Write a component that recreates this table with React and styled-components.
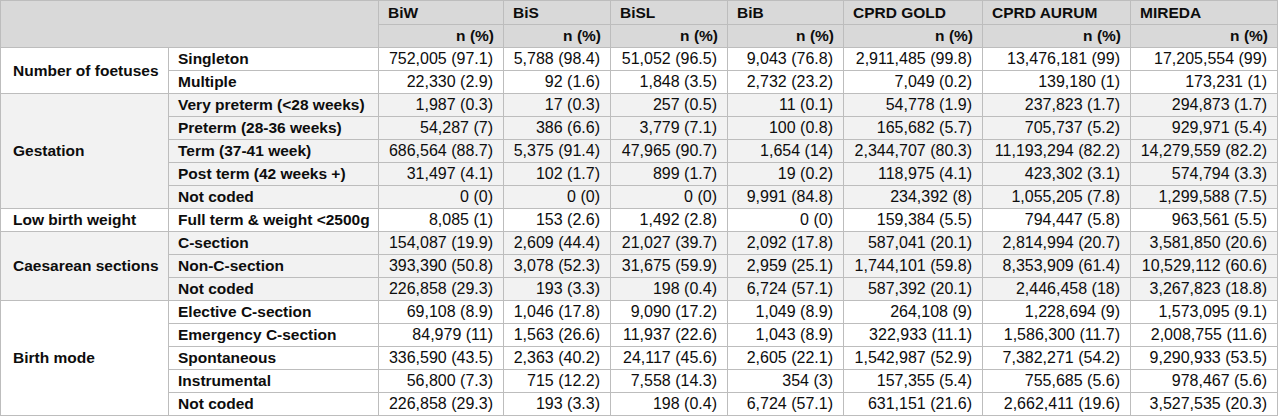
import React from "react";
import styled, { createGlobalStyle } from "styled-components";

const Global = createGlobalStyle`
  html, body { margin: 0; padding: 0; background: #fff; }
  body { font-family: "Liberation Sans", Arial, sans-serif; color: #0d0d0d; }
`;

const cols = [
  { name: "BiW", w: 125 },
  { name: "BiS", w: 107 },
  { name: "BiSL", w: 117 },
  { name: "BiB", w: 116 },
  { name: "CPRD GOLD", w: 139 },
  { name: "CPRD AURUM", w: 148 },
  { name: "MIREDA", w: 147 },
];

const groups = [
  {
    label: "Number of foetuses",
    shaded: false,
    rows: [
      ["Singleton", "752,005 (97.1)", "5,788 (98.4)", "51,052 (96.5)", "9,043 (76.8)", "2,911,485 (99.8)", "13,476,181 (99)", "17,205,554 (99)"],
      ["Multiple", "22,330 (2.9)", "92 (1.6)", "1,848 (3.5)", "2,732 (23.2)", "7,049 (0.2)", "139,180 (1)", "173,231 (1)"],
    ],
  },
  {
    label: "Gestation",
    shaded: true,
    rows: [
      ["Very preterm (<28 weeks)", "1,987 (0.3)", "17 (0.3)", "257 (0.5)", "11 (0.1)", "54,778 (1.9)", "237,823 (1.7)", "294,873 (1.7)"],
      ["Preterm (28-36 weeks)", "54,287 (7)", "386 (6.6)", "3,779 (7.1)", "100 (0.8)", "165,682 (5.7)", "705,737 (5.2)", "929,971 (5.4)"],
      ["Term (37-41 week)", "686,564 (88.7)", "5,375 (91.4)", "47,965 (90.7)", "1,654 (14)", "2,344,707 (80.3)", "11,193,294 (82.2)", "14,279,559 (82.2)"],
      ["Post term (42 weeks +)", "31,497 (4.1)", "102 (1.7)", "899 (1.7)", "19 (0.2)", "118,975 (4.1)", "423,302 (3.1)", "574,794 (3.3)"],
      ["Not coded", "0 (0)", "0 (0)", "0 (0)", "9,991 (84.8)", "234,392 (8)", "1,055,205 (7.8)", "1,299,588 (7.5)"],
    ],
  },
  {
    label: "Low birth weight",
    shaded: false,
    rows: [
      ["Full term & weight <2500g", "8,085 (1)", "153 (2.6)", "1,492 (2.8)", "0 (0)", "159,384 (5.5)", "794,447 (5.8)", "963,561 (5.5)"],
    ],
  },
  {
    label: "Caesarean sections",
    shaded: true,
    rows: [
      ["C-section", "154,087 (19.9)", "2,609 (44.4)", "21,027 (39.7)", "2,092 (17.8)", "587,041 (20.1)", "2,814,994 (20.7)", "3,581,850 (20.6)"],
      ["Non-C-section", "393,390 (50.8)", "3,078 (52.3)", "31,675 (59.9)", "2,959 (25.1)", "1,744,101 (59.8)", "8,353,909 (61.4)", "10,529,112 (60.6)"],
      ["Not coded", "226,858 (29.3)", "193 (3.3)", "198 (0.4)", "6,724 (57.1)", "587,392 (20.1)", "2,446,458 (18)", "3,267,823 (18.8)"],
    ],
  },
  {
    label: "Birth mode",
    shaded: false,
    rows: [
      ["Elective C-section", "69,108 (8.9)", "1,046 (17.8)", "9,090 (17.2)", "1,049 (8.9)", "264,108 (9)", "1,228,694 (9)", "1,573,095 (9.1)"],
      ["Emergency C-section", "84,979 (11)", "1,563 (26.6)", "11,937 (22.6)", "1,043 (8.9)", "322,933 (11.1)", "1,586,300 (11.7)", "2,008,755 (11.6)"],
      ["Spontaneous", "336,590 (43.5)", "2,363 (40.2)", "24,117 (45.6)", "2,605 (22.1)", "1,542,987 (52.9)", "7,382,271 (54.2)", "9,290,933 (53.5)"],
      ["Instrumental", "56,800 (7.3)", "715 (12.2)", "7,558 (14.3)", "354 (3)", "157,355 (5.4)", "755,685 (5.6)", "978,467 (5.6)"],
      ["Not coded", "226,858 (29.3)", "193 (3.3)", "198 (0.4)", "6,724 (57.1)", "631,151 (21.6)", "2,662,411 (19.6)", "3,527,535 (20.3)"],
    ],
  },
];

const Table = styled.table`
  border-collapse: collapse;
  table-layout: fixed;
  width: 1277px;
  font-size: 15.5px;
  line-height: 18px;
  border: 1px solid #bdbdbd;
`;

const HeadRow = styled.tr`
  height: ${(p) => p.$h}px;
  background: #d9d9d9;
`;

const Corner = styled.th`
  border: 1px solid #bdbdbd;
  background: #d9d9d9;
`;

const HeadCell = styled.th`
  border: 1px solid #bdbdbd;
  font-weight: 700;
  text-align: ${(p) => (p.$right ? "right" : "left")};
  padding: ${(p) => (p.$right ? "0 9px 0 6px" : "0 6px 0 9px")};
  white-space: nowrap;
  vertical-align: middle;
`;

const BodyRow = styled.tr`
  height: 23px;
  background: ${(p) => (p.$shaded ? "#f2f2f2" : "#ffffff")};
`;

const GroupCell = styled.td`
  border: 1px solid #bdbdbd;
  font-weight: 700;
  padding: 0 6px 0 12px;
  white-space: nowrap;
  vertical-align: middle;
`;

const LabelCell = styled.td`
  border: 1px solid #bdbdbd;
  font-weight: 700;
  padding: 0 4px 0 9px;
  white-space: nowrap;
  vertical-align: middle;
`;

const NumCell = styled.td`
  border: 1px solid #bdbdbd;
  font-size: 16px;
  text-align: right;
  padding: 0 10px 0 2px;
  white-space: nowrap;
  vertical-align: middle;
`;

export default function App() {
  return (
    <>
      <Global />
      <Table>
        <colgroup>
          <col style={{ width: 168 }} />
          <col style={{ width: 210 }} />
          {cols.map((c) => (
            <col key={c.name} style={{ width: c.w }} />
          ))}
        </colgroup>
        <thead>
          <HeadRow $h={24}>
            <Corner colSpan={2} rowSpan={2} />
            {cols.map((c) => (
              <HeadCell key={c.name}>{c.name}</HeadCell>
            ))}
          </HeadRow>
          <HeadRow $h={23}>
            {cols.map((c) => (
              <HeadCell key={c.name} $right>
                n (%)
              </HeadCell>
            ))}
          </HeadRow>
        </thead>
        <tbody>
          {groups.map((g) =>
            g.rows.map((r, i) => (
              <BodyRow key={g.label + i} $shaded={g.shaded}>
                {i === 0 && <GroupCell rowSpan={g.rows.length}>{g.label}</GroupCell>}
                <LabelCell>{r[0]}</LabelCell>
                {r.slice(1).map((v, j) => (
                  <NumCell key={j}>{v}</NumCell>
                ))}
              </BodyRow>
            ))
          )}
        </tbody>
      </Table>
    </>
  );
}
